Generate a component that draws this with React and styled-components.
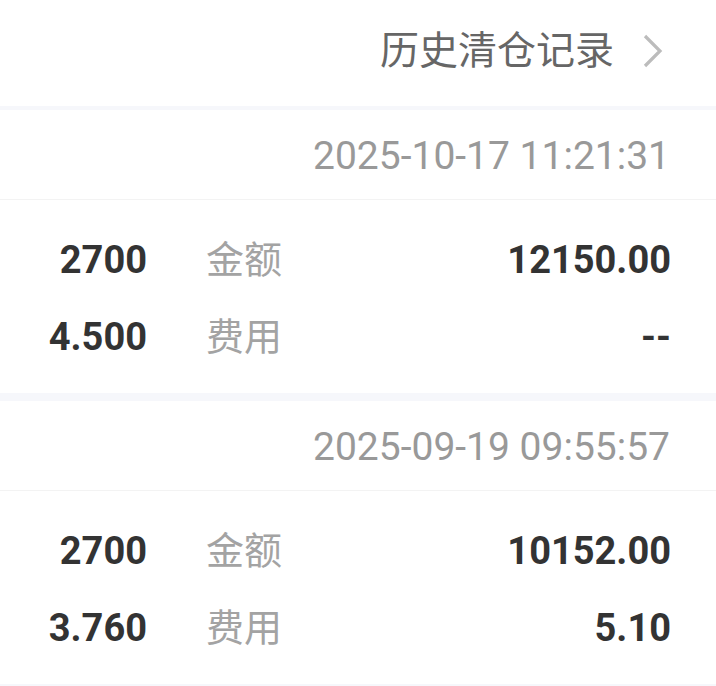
import styled, { createGlobalStyle } from "styled-components";

const GlobalStyle = createGlobalStyle`
  body {
    margin: 0;
    background: #ffffff;
    font-family: Roboto, "Noto Sans CJK SC", sans-serif;
  }
`;

const Page = styled.div`
  width: 716px;
  overflow: hidden;
`;

const Header = styled.div`
  height: 106px;
  display: flex;
  justify-content: flex-end;
  align-items: center;
  gap: 29px;
  padding: 0 53px 4px 0;
  box-sizing: border-box;
`;

const HeaderTitle = styled.span`
  font-size: 39px;
  line-height: 46px;
  color: #666666;
`;

const Band = styled.div`
  height: ${(p) => p.size}px;
  background: #f6f7fb;
`;

const Card = styled.div`
  background: #ffffff;
`;

const DateRow = styled.div`
  height: 90px;
  display: flex;
  justify-content: flex-end;
  align-items: center;
  padding: 2px 46px 0 0;
  box-sizing: border-box;
  border-bottom: 1px solid #f3f3f3;
  font-size: 39px;
  line-height: 44px;
  color: #999999;
`;

const Body = styled.div`
  padding: 21px 45px 18px 0;
`;

const Row = styled.div`
  height: 77px;
  display: grid;
  grid-template-columns: 147px auto 1fr;
  align-items: center;
  font-size: 38px;
  line-height: 44px;
`;

const Num = styled.span`
  text-align: right;
  font-weight: 700;
  color: #333333;
`;

const Label = styled.span`
  margin-left: 59px;
  color: #a3a3a3;
`;

const Value = styled.span`
  text-align: right;
  font-weight: 700;
  color: #333333;
`;

function Chevron() {
  return (
    <svg width="20" height="34" viewBox="0 0 20 34">
      <path d="M2 2 L17 17 L2 32" fill="none" stroke="#bcbcbc" strokeWidth="3.2" />
    </svg>
  );
}

const records = [
  { time: "2025-10-17 11:21:31", qty: "2700", price: "4.500", amount: "12150.00", fee: "--" },
  { time: "2025-09-19 09:55:57", qty: "2700", price: "3.760", amount: "10152.00", fee: "5.10" },
];

export default function App() {
  return (
    <>
      <GlobalStyle />
      <Page>
        <Header>
          <HeaderTitle>历史清仓记录</HeaderTitle>
          <Chevron />
        </Header>
        <Band size={4} />
        {records.map((r) => (
          <div key={r.time}>
            <Card>
              <DateRow>{r.time}</DateRow>
              <Body>
                <Row>
                  <Num>{r.qty}</Num>
                  <Label>金额</Label>
                  <Value>{r.amount}</Value>
                </Row>
                <Row>
                  <Num>{r.price}</Num>
                  <Label>费用</Label>
                  <Value>{r.fee}</Value>
                </Row>
              </Body>
            </Card>
            <Band size={8} />
          </div>
        ))}
      </Page>
    </>
  );
}
